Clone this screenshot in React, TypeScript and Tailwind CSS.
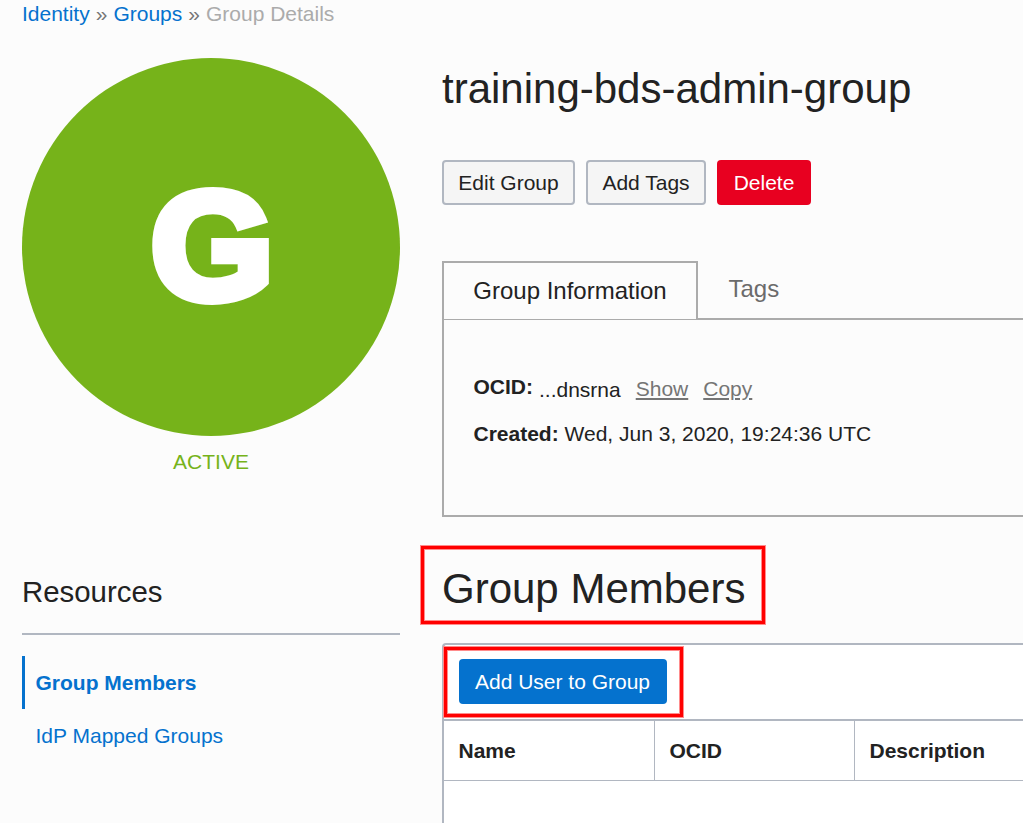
import React from "react";

const columns = ["Name", "OCID", "Description"];

function Sidebar() {
  return (
    <aside className="w-[378px] shrink-0">
      <div className="mt-[30px] flex h-[378px] w-[378px] items-center justify-center rounded-full bg-[#76b31a] pb-[2px] pl-[2px]">
        <span className="scale-x-[1.035] text-[152px] leading-[152px] font-bold text-white [-webkit-text-stroke:10px_white]">G</span>
      </div>
      <div className="mt-3 text-center leading-7 text-[#76b31a]">ACTIVE</div>
      <h2 className="mt-[98px] h-[61px] border-b-2 border-[#b1b7c1] text-[29.4px] leading-9">
        Resources
      </h2>
      <nav className="mt-[21px] flex flex-col text-[#0572ce]">
        <a className="flex h-[53px] items-center border-l-3 border-[#0572ce] pl-[10.5px] font-bold">Group Members</a>
        <a className="flex h-[53px] items-center pl-[13.5px]">IdP Mapped Groups</a>
      </nav>
    </aside>
  );
}

function Details() {
  return (
    <section>
      <div className="flex h-[59px]">
        <div className="flex w-[256px] items-center justify-center border-2 border-b border-[#ababab] text-2xl">
          Group Information
        </div>
        <div className="flex-1 border-b-2 border-[#ababab] pt-[9px] pl-[30.5px] text-2xl leading-[38px] text-[#6b6b6b]">
          Tags
        </div>
      </div>
      <div className="h-[197px] border-b-2 border-l-2 border-[#ababab] pt-[53px] pl-[29.5px]">
        <div className="flex leading-7">
          <b>OCID:</b>
          <span className="ml-[6px] pt-[3px]">...dnsrna</span>
          <a className="ml-[15px] pt-[2px] text-[#757575] underline">Show</a>
          <a className="ml-[15px] pt-[2px] text-[#757575] underline">Copy</a>
        </div>
        <div className="mt-4 leading-7">
          <b>Created:</b> Wed, Jun 3, 2020, 19:24:36 UTC
        </div>
      </div>
    </section>
  );
}

function Members() {
  return (
    <section>
      <div className="relative mt-[48px] h-[48px]">
        <h2 className="text-[42px] leading-[48px]">Group Members</h2>
        <div className="absolute -top-[19px] -left-[21px] h-[78px] w-[344px] border-3 border-[#ff0000] shadow-[0_0_0_1px_#ff8c8c,inset_0_0_0_1px_#ff8c8c]" />
      </div>
      <div className="mt-[30px] h-[190px] rounded-tl border-t-2 border-l-2 border-[#b1b7c1] bg-white">
        <div className="relative h-[76px] border-b-2 border-[#b1b7c1] pt-[14px] pl-[15px]">
          <button className="h-[45px] w-[208px] rounded bg-[#0572ce] pr-px text-white">Add User to Group</button>
          <div className="absolute top-[2px] left-0 h-[70px] w-[239px] border-3 border-[#ff0000] shadow-[0_0_0_1px_#ff8c8c,inset_0_0_0_1px_#ff8c8c]" />
        </div>
        <div className="grid h-[60px] grid-cols-[211px_200px_1fr] border-b border-[#b1b7c1] font-bold">
          {columns.map((name) => (
            <div key={name} className="flex items-center border-r border-[#b1b7c1] pl-[14.5px] last:border-r-0">
              {name}
            </div>
          ))}
        </div>
      </div>
    </section>
  );
}

export default function App() {
  return (
    <div className="h-[823px] w-[1023px] overflow-hidden bg-[#fcfcfc] pl-[22px] font-['Liberation_Sans',Arial,sans-serif] text-[21px] text-[#222222]">
      <nav className="flex h-7 gap-[6px] leading-7 text-[#0572ce]">
        <a>Identity</a>
        <span className="text-[#757575]">»</span>
        <a>Groups</a>
        <span className="text-[#757575]">»</span>
        <span className="text-[#ababab]">Group Details</span>
      </nav>
      <div className="flex gap-[42px]">
        <Sidebar />
        <main className="flex-1">
          <h1 className="mt-[37px] text-[42px] leading-[48px]">training-bds-admin-group</h1>
          <div className="mt-[47px] mb-14 flex h-[45px] gap-[11px]">
            <button className="w-[133px] rounded border-2 border-[#b1b7c1] bg-[#f5f5f5]">Edit Group</button>
            <button className="w-[120px] rounded border-2 border-[#b1b7c1] bg-[#f5f5f5]">Add Tags</button>
            <button className="w-[94px] rounded bg-[#e80020] text-white">Delete</button>
          </div>
          <Details />
          <Members />
        </main>
      </div>
    </div>
  );
}
